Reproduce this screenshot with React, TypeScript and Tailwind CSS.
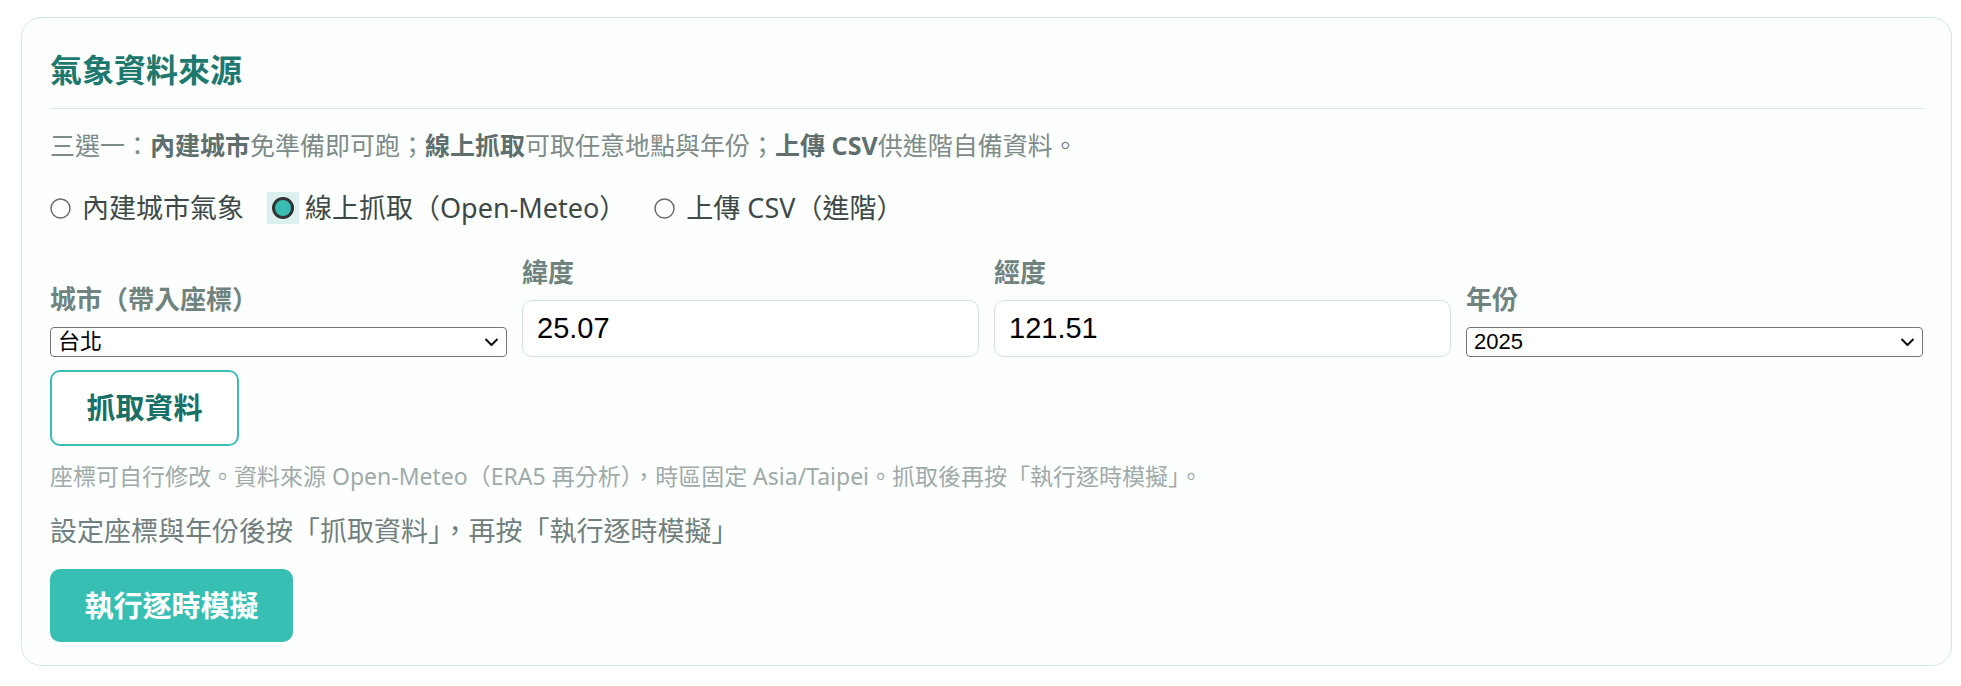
import { useState } from "react"

const cities = ["台北", "台中", "台南", "高雄", "花蓮"]
const years = ["2025", "2024", "2023", "2022", "2021", "2020"]

function RadioDot({ checked }: { checked: boolean }) {
  if (checked) {
    return (
      <span className="flex h-[22px] w-[22px] shrink-0 items-center justify-center bg-[#dcf1ef] outline-[5px] outline-solid outline-[#dcf1ef]">
        <svg width="22" height="22" viewBox="0 0 22 22">
          <circle cx="11" cy="11" r="9.5" fill="#38bdb2" stroke="#333333" strokeWidth="3" />
        </svg>
      </span>
    )
  }
  return (
    <svg width="21" height="21" viewBox="0 0 21 21" className="shrink-0">
      <circle cx="10.5" cy="10.5" r="9.5" fill="#ffffff" stroke="#6b6b6b" strokeWidth="1.5" />
    </svg>
  )
}

function Chevron() {
  return (
    <svg
      width="15"
      height="9"
      viewBox="0 0 15 9"
      className="pointer-events-none absolute right-[8px] top-1/2 -translate-y-1/2"
    >
      <path d="M1.5 1.5 L7.5 7.5 L13.5 1.5" fill="none" stroke="#111111" strokeWidth="2" />
    </svg>
  )
}

function PlainSelect({ value, options, onChange }: { value: string; options: string[]; onChange: (v: string) => void }) {
  return (
    <div className="relative">
      <select
        value={value}
        onChange={(e) => onChange(e.target.value)}
        className="h-[30px] w-full appearance-none rounded-[4px] border border-[#767676] bg-white pl-[7px] text-[22px] leading-[28px] text-black outline-none [font-family:'Liberation_Sans','Noto_Sans_CJK_TC',sans-serif]"
      >
        {options.map((o) => (
          <option key={o} value={o}>
            {o}
          </option>
        ))}
      </select>
      <Chevron />
    </div>
  )
}

function FieldLabel({ children }: { children: React.ReactNode }) {
  return <div className="mb-[11px] text-[26px] font-semibold leading-[34px] text-[#70837f]">{children}</div>
}

export default function App() {
  const [source, setSource] = useState<"builtin" | "online" | "csv">("online")
  const [city, setCity] = useState("台北")
  const [lat, setLat] = useState("25.07")
  const [lon, setLon] = useState("121.51")
  const [year, setYear] = useState("2025")

  const options = [
    { key: "builtin" as const, label: "內建城市氣象" },
    { key: "online" as const, label: "線上抓取（Open-Meteo）" },
    { key: "csv" as const, label: "上傳 CSV（進階）" },
  ]

  return (
    <div
      lang="zh-Hant-TW"
      className="min-h-screen bg-white pt-[17px] [font-family:'Noto_Sans','Noto_Sans_CJK_TC',sans-serif]"
    >
      <section className="ml-[21px] w-[1931px] rounded-[20px] border border-[#d3e7e3] bg-[#fdfefe] px-[28px] pb-[23px] pt-[32px]">
        <h2 className="border-b border-[#d8e9e6] pb-[18px] text-[32px] font-bold leading-[40px] text-[#1d786e]">
          氣象資料來源
        </h2>

        <p className="mt-[18px] text-[25px] leading-[36px] text-[#7d8b89]">
          三選一：<b className="font-bold text-[#5e6f6d]">內建城市</b>免準備即可跑；
          <b className="font-bold text-[#5e6f6d]">線上抓取</b>可取任意地點與年份；
          <b className="font-bold text-[#5e6f6d]">上傳 CSV</b>供進階自備資料。
        </p>

        <div className="mt-[25px] flex h-[40px] items-center gap-[28px]">
          {options.map((o) => (
            <label
              key={o.key}
              onClick={() => setSource(o.key)}
              className="flex cursor-pointer items-center gap-[11px] text-[27px] leading-[40px] text-[#3e4947]"
            >
              <RadioDot checked={source === o.key} />
              <span>{o.label}</span>
            </label>
          ))}
        </div>

        <div className="mt-[27px] grid grid-cols-4 items-end gap-x-[15px]">
          <div>
            <FieldLabel>城市（帶入座標）</FieldLabel>
            <PlainSelect value={city} options={cities} onChange={setCity} />
          </div>
          <div>
            <FieldLabel>緯度</FieldLabel>
            <input
              value={lat}
              onChange={(e) => setLat(e.target.value)}
              className="h-[57px] w-full rounded-[10px] border border-[#d3e5e2] bg-white px-[14px] text-[29px] text-black outline-none [font-family:'Liberation_Sans',sans-serif]"
            />
          </div>
          <div>
            <FieldLabel>經度</FieldLabel>
            <input
              value={lon}
              onChange={(e) => setLon(e.target.value)}
              className="h-[57px] w-full rounded-[10px] border border-[#d3e5e2] bg-white px-[14px] text-[29px] text-black outline-none [font-family:'Liberation_Sans',sans-serif]"
            />
          </div>
          <div>
            <FieldLabel>年份</FieldLabel>
            <PlainSelect value={year} options={years} onChange={setYear} />
          </div>
        </div>

        <button className="mt-[13px] flex h-[76px] w-[189px] items-center justify-center rounded-[10px] border-2 border-[#3cbdb2] bg-white text-[29px] font-bold text-[#1a6f66]">
          抓取資料
        </button>

        <p className="mt-[14px] text-[23px] leading-[32px] text-[#9eaba9]">
          座標可自行修改。資料來源 Open-Meteo（ERA5 再分析），時區固定 Asia/Taipei。抓取後再按「執行逐時模擬」。
        </p>

        <p className="mt-[20px] text-[27px] leading-[38px] text-[#71807e]">
          設定座標與年份後按「抓取資料」，再按「執行逐時模擬」
        </p>

        <button className="mt-[19px] flex h-[73px] w-[243px] items-center justify-center rounded-[10px] bg-[#37bfb4] text-[29px] font-bold text-white">
          執行逐時模擬
        </button>
      </section>
    </div>
  )
}
